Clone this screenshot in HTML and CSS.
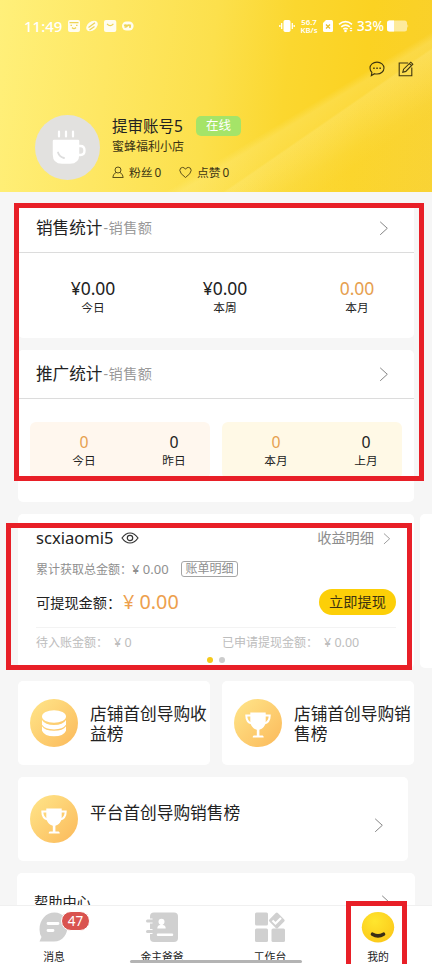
FILE: index.html
```html
<!DOCTYPE html>
<html lang="zh-CN">
<head>
<meta charset="utf-8">
<title>我的</title>
<link rel="stylesheet" href="styles.css">
</head>
<body>
<svg class="defs" width="0" height="0">
  <defs>
    <linearGradient id="gold" x1="0" y1="0" x2="1" y2="1"><stop offset="0" stop-color="#ffe68a"/><stop offset="1" stop-color="#fbb95a"/></linearGradient>
    <radialGradient id="face" cx=".4" cy=".3" r=".75"><stop offset="0" stop-color="#ffe62e"/><stop offset="1" stop-color="#fcc91a"/></radialGradient>
    <symbol id="chevron" viewBox="0 0 10 16"><path d="M1.2 1.8 8.3 8.3 1.2 14.8" fill="none" stroke="#858585"/></symbol>
    <symbol id="trophy" viewBox="0 0 48 48">
      <circle cx="24" cy="24" r="24" fill="url(#gold)"/>
      <path d="M16.300 13.500h15.400v8.500c0 5-3.200 8.100-6.300 8.700v5.800h2.600c1 0 1.700.6 1.700 2h-11c0-1.400.7-2 1.700-2h2.400v-5.800c-3.100-.6-6.500-3.700-6.500-8.700z" fill="#fff"/>
      <path d="M17 16.500h-4.700c0 4.700 1.800 7.200 5.500 8M31 16.500h4.700c0 4.700-1.800 7.200-5.500 8" fill="none" stroke="#fff" stroke-width="2"/>
    </symbol>
  </defs>
</svg>
<div class="phone">
  <main class="content">
    <header class="hero">
      <div class="status">
        <span class="time">11:49</span>
        <svg class="notices" width="68" height="14" viewBox="0 0 68 14">
          <g fill="#fffdf0">
            <rect x="0" y="1" width="12" height="12" rx="2"/>
            <ellipse cx="24" cy="7" rx="6.500" ry="4.300" transform="rotate(-38 24 7)"/>
            <rect x="36" y="1" width="12.300" height="12" rx="2"/>
            <rect x="54" y="2.500" width="11.600" height="9" rx="4.500"/>
          </g>
          <g fill="none" stroke="#eed455" stroke-width="1.200">
            <path d="M1.500 3.600h9M2.500 6.300h1.500M8 6.300h1.500M4 8.500q2 2.200 4 0M20.500 8.500 27 3.700M21.500 11l5-3.500M39 4.800q3.200 3.600 6.400 0"/>
            <path d="M56 6.500q2-1 3 .5 1-1.500 4-.5M56.500 8h2M61 8h2" stroke-width="1.600"/>
          </g>
        </svg>
        <svg class="vibrate" width="16" height="14" viewBox="0 0 16 14"><rect x="4.500" y="1" width="7" height="12" rx="1.700" fill="#fff"/><path d="M2.700 4v6M13.300 4v6M.8 6v2M15.200 6v2" stroke="#fff" stroke-width="1.300"/></svg>
        <div class="speed"><span>56.7</span><span>KB/s</span></div>
        <svg class="sim" width="10" height="12" viewBox="0 0 10 12"><path d="M3 0h5.500Q10 0 10 1.500v9Q10 12 8.500 12h-7Q0 12 0 10.500V3z" fill="#fff"/><path d="m3 4.500 4 4m0-4-4 4" stroke="#e9bf2c" stroke-width="1.300"/></svg>
        <svg class="wifi" width="16" height="13" viewBox="0 0 16 13"><path d="M1 4.300q6.500-5.300 13 0M3.200 6.900q4.300-3.500 8.600 0M5.300 9.200q2.200-1.700 4.400 0" fill="none" stroke="#fff" stroke-width="1.600"/><circle cx="7.500" cy="11" r="1.300" fill="#fff"/><path d="m11.500 9 1.500-1.800L14.500 9zM11.500 10l1.500 1.800L14.500 10z" fill="#fff"/></svg>
        <span class="percent">33%</span>
        <svg width="22" height="12" viewBox="0 0 22 12"><rect width="20" height="11" y=".5" rx="2.500" fill="#fff" opacity=".55"/><path d="M2.500.5H7v11H2.500Q0 11.500 0 9V3Q0 .5 2.500.5z" fill="#fff"/><path d="M20.500 4v4q1.500-2 0-4z" fill="#fff" opacity=".7"/></svg>
      </div>
      <div class="actions">
        <svg width="16" height="16" viewBox="0 0 16 16"><path d="M8 1.100c4 0 7 2.600 7 5.900s-3 6-7 6q-1.300 0-2.400-.3L2.300 14.600l.6-3.200C1.600 10.300 1 8.800 1 7c0-3.300 3-5.900 7-5.900z" fill="none" stroke="#3e3510" stroke-width="1.100"/><path d="M4.200 6.600h1.500v1.500H4.200zM7.300 6.600h1.500v1.500H7.300zM10.400 6.600h1.500v1.500h-1.500z" fill="#3e3510"/></svg>
        <svg width="16" height="16" viewBox="0 0 16 16"><path d="M10.200 2H1.200v12.700h12.600V6.500M4.800 11.200l.8-3L12.800 1.200l2 2-7 7.200zM11.400 2.700l2 2" fill="none" stroke="#3e3510" stroke-width="1.100"/></svg>
      </div>
      <div class="profile">
        <div class="avatar">
          <svg width="64" height="64" viewBox="0 0 64 64"><path d="M19 26h24v13.500q0 8-8 8h-8q-8 0-8-8z" fill="#fff" stroke="#fff" stroke-width="2.500" stroke-linejoin="round"/><path d="M43 31h2.500q4 0 4 4.500t-4 4.500H43" fill="none" stroke="#fff" stroke-width="2.400"/><path d="M24 16.500v5M31 16.500v5M38 16.500v5" stroke="#fff" stroke-width="2.200" stroke-linecap="round"/><path d="M23 37.500q1.500 4.500 6 5.500" fill="none" stroke="#ddd" stroke-width="1.800" stroke-linecap="round"/></svg>
        </div>
        <div class="who">
          <div class="who-top"><span class="nick">提审账号5</span><span class="online">在线</span></div>
          <div class="shop">蜜蜂福利小店</div>
          <div class="counts">
            <svg width="12" height="13" viewBox="0 0 12 13"><circle cx="6" cy="4" r="3" fill="none" stroke="#4c4113" stroke-width=".9"/><path d="M4 6.500Q1 8 .8 11.500h10.400Q11 8 8 6.500" fill="none" stroke="#4c4113" stroke-width=".9"/></svg>
            <span class="fans">粉丝<i>0</i></span>
            <svg width="13" height="13" viewBox="0 0 13 13"><path d="M6.500 11.500Q.8 7.500.8 4.400.9 1.500 3.600 1.400 5.600 1.400 6.500 3.300 7.400 1.400 9.400 1.400q2.700.1 2.800 3 0 3.100-5.700 7.100z" fill="none" stroke="#4c4113" stroke-width=".9"/></svg>
            <span class="likes">点赞<i>0</i></span>
          </div>
        </div>
      </div>
    </header>

    <section class="card sales">
      <div class="card-head"><h2>销售统计</h2><small>-销售额</small><svg class="arrow"><use href="#chevron"/></svg></div>
      <div class="sales-grid">
        <div class="stat"><b>¥0.00</b><span>今日</span></div>
        <div class="stat"><b>¥0.00</b><span>本周</span></div>
        <div class="stat hot"><b>0.00</b><span>本月</span></div>
      </div>
    </section>

    <section class="card promo">
      <div class="card-head"><h2>推广统计</h2><small>-销售额</small><svg class="arrow"><use href="#chevron"/></svg></div>
      <div class="promo-grid">
        <div class="pair peach">
          <div class="stat hot"><b>0</b><span>今日</span></div>
          <div class="stat"><b>0</b><span>昨日</span></div>
        </div>
        <div class="pair cream">
          <div class="stat hot"><b>0</b><span>本月</span></div>
          <div class="stat"><b>0</b><span>上月</span></div>
        </div>
      </div>
    </section>

    <div class="slides">
      <section class="card wallet">
        <div class="wallet-name">
          <span>scxiaomi5</span>
          <svg width="18" height="14" viewBox="0 0 18 14"><path d="M1 7q3.500-5 8-5t8 5q-3.500 5-8 5T1 7z" fill="none" stroke="#333" stroke-width="1.200"/><circle cx="9" cy="7" r="2.700" fill="none" stroke="#333" stroke-width="1.200"/></svg>
          <span class="detail">收益明细</span>
          <svg class="arrow"><use href="#chevron"/></svg>
        </div>
        <div class="wallet-total"><span class="total-label">累计获取总金额：</span><span class="total-sum">¥ 0.00</span><span class="bill">账单明细</span></div>
        <div class="wallet-cash"><span class="cash-label">可提现金额：</span><b>¥ 0.00</b><span class="withdraw">立即提现</span></div>
        <div class="wallet-foot"><span class="wait">待入账金额：</span><span class="wait-sum">¥ 0</span><span class="applied">已申请提现金额：</span><span class="applied-sum">¥ 0.00</span></div>
        <div class="dots"><i class="on"></i><i></i></div>
      </section>
      <section class="card peek"></section>
    </div>

    <div class="ranks">
      <section class="card rank">
        <svg class="medal" viewBox="0 0 48 48"><circle cx="24" cy="24" r="24" fill="url(#gold)"/><ellipse cx="24" cy="17.500" rx="12" ry="6.200" fill="#fff"/><path d="M12 21q3 5 12 5t12-5v4.800q-3 4.600-12 4.600t-12-4.600zM12 27.300q3 4.500 12 4.500t12-4.500v4.500q-2.500 5.500-12 5.500t-12-5.500z" fill="#fff"/></svg>
        <p>店铺首创导购收益榜</p>
      </section>
      <section class="card rank">
        <svg class="medal"><use href="#trophy"/></svg>
        <p>店铺首创导购销售榜</p>
      </section>
    </div>
    <section class="card rank platform">
      <svg class="medal"><use href="#trophy"/></svg>
      <p>平台首创导购销售榜</p>
      <svg class="arrow"><use href="#chevron"/></svg>
    </section>
    <section class="card help"><span>帮助中心</span><svg class="arrow"><use href="#chevron"/></svg></section>
  </main>

  <nav class="tabs">
    <div class="tab">
      <svg width="32" height="32" viewBox="0 0 32 32"><path d="M1.500 30.500 3.500 26Q1.500 23 1.500 18.500C1.500 9 8 1.500 16.500 1.500S29.500 8 29.500 15.500 25 30.500 16 30.500z" fill="#d0d0d0"/><path d="M10 12.500h10M10 19.500h5" stroke="#fff" stroke-width="2.800" stroke-linecap="round"/></svg>
      <em class="badge">47</em>
      <span>消息</span>
    </div>
    <div class="tab">
      <svg width="32" height="32" viewBox="0 0 32 32"><rect x="4" y="1.500" width="28" height="29.500" rx="4" fill="#d0d0d0"/><path d="M1.500 10h5M1.500 20.500h5" stroke="#fff" stroke-width="5"/><path d="M1.500 10h5M1.500 20.500h5" stroke="#d0d0d0" stroke-width="3" stroke-linecap="round"/><circle cx="15.500" cy="10.800" r="3" fill="#fff"/><path d="M14.300 12h2.400v2q3 .3 3 3.500h-8.400q0-3.200 3-3.500z" fill="#fff"/><path d="M12 23.800h14" stroke="#fff" stroke-width="2.500" stroke-linecap="round"/></svg>
      <span>金主爸爸</span>
    </div>
    <div class="tab">
      <svg width="32" height="32" viewBox="0 0 32 32"><g fill="#d0d0d0"><rect x="1" y="1.500" width="13" height="13" rx="1.500"/><rect x="1" y="17.500" width="13" height="13.500" rx="1.500"/><rect x="17.500" y="17.500" width="13.500" height="13.500" rx="1.500"/><rect x="16.800" y="3.500" width="12" height="12" rx="1.500" transform="rotate(45 22.800 9.500)"/></g><path d="m18.500 9.500 3 3 5.500-5.500" fill="none" stroke="#fff" stroke-width="2.200"/></svg>
      <span>工作台</span>
    </div>
    <div class="tab">
      <svg width="34" height="32" viewBox="0 0 34 32"><ellipse cx="17" cy="16.200" rx="16.200" ry="15.200" fill="url(#face)"/><path d="M11.500 23.200q5.500 3.300 11 0" fill="none" stroke="#3b2d15" stroke-width="3.600" stroke-linecap="round"/></svg>
      <span>我的</span>
    </div>
    <div class="home-bar"></div>
  </nav>
  <div class="mark mark-stats"></div>
  <div class="mark mark-wallet"></div>
  <div class="mark mark-mine"></div>
</div>
</body>
</html>
```

FILE: styles.css
```css
* { box-sizing: border-box; }
body {
  margin: 0;
  font-family: "Noto Sans", "Noto Sans CJK SC", sans-serif;
  color: #222;
}
svg { display: block; flex: none; }
i, em { font-style: normal; }
.defs { position: absolute; }
.phone {
  position: relative;
  width: 432px;
  height: 964px;
  display: flex;
  flex-direction: column;
  background: #f6f6f6;
  overflow: hidden;
}
.content { flex: 1; min-height: 0; overflow: hidden; }

.hero {
  height: 192px;
  padding-top: 17px;
  background:
    linear-gradient(145.400deg, transparent 70.500%, rgba(255, 240, 150, .22) 71%, rgba(255, 230, 100, .05) 84%),
    linear-gradient(149deg, transparent 64.500%, rgba(255, 240, 150, .28) 66.500%, rgba(255, 235, 130, .08) 80%),
    linear-gradient(97deg, #fff07a 0%, #fee763 25%, #fce04c 48%, #fbd72f 65%, #fbd222 82%, #f9d02c 100%);
}
.status {
  height: 18px;
  padding-left: 24px;
  display: flex;
  align-items: center;
  color: #fff;
}
.time { width: 44px; font-size: 15px; line-height: 18px; font-weight: 500; }
.vibrate { margin-left: 143px; }
.speed { display: flex; flex-direction: column; margin-left: 4px; width: 20px; font-size: 7.800px; font-weight: 600; white-space: nowrap; align-items: center; }
.speed span { line-height: 8px; height: 8px; }
.sim { margin-left: 4px; }
.wifi { margin-left: 5px; }
.percent { width: 30px; font-size: 13.500px; line-height: 18px; font-weight: 500; margin-left: 3px; }
.actions { display: flex; gap: 13px; padding: 26px 0 0 369px; height: 42px; }

.profile { display: flex; padding: 38px 0 0 35px; }
.avatar { width: 65px; height: 65px; border-radius: 50%; background: #e2e1df; }
.who { padding-left: 12px; }
.who-top { display: flex; height: 23px; align-items: center; }
.nick { width: 84px; font-size: 15.500px; line-height: 23px; white-space: nowrap; }
.online {
  width: 45px; height: 20px; margin-top: -1px; border-radius: 5px;
  background: #a5e468; color: #fff; font-size: 12.500px; line-height: 20px; text-align: center;
}
.shop { font-size: 12px; line-height: 18px; color: #3c3413; }
.counts { display: flex; align-items: center; height: 18px; margin-top: 7px; font-size: 11.800px; line-height: 18px; color: #3c3413; }
.fans { width: 55px; padding-left: 5px; }
.counts i { margin-left: 2px; }
.likes { padding-left: 5px; }

.card { background: #fff; border-radius: 5px; margin-left: 18px; width: 396px; }
.card-head { display: flex; align-items: center; height: 49px; padding: 0 25px 0 18px; border-bottom: 1px solid #dcdcdc; }
.card-head h2 { margin: 0; font-size: 16.600px; line-height: 24px; font-weight: 400; }
.card-head small { font-size: 14.200px; line-height: 24px; color: #999; margin-left: 1px; letter-spacing: .5px; }
.arrow { width: 10px; height: 16px; margin-left: auto; }

.sales { margin-top: 12px; height: 134px; }
.sales-grid { display: grid; grid-template-columns: repeat(3, 132px); padding: 24px 0 0 9px; }
.stat { display: flex; flex-direction: column; align-items: center; }
.stat b { font-weight: 400; font-size: 17.500px; line-height: 22px; }
.stat span { font-size: 11.700px; line-height: 17px; }
.stat.hot b { color: #e6a04f; }

.promo { margin-top: 12px; height: 152px; }
.promo-grid { display: grid; grid-template-columns: 180px 180px; gap: 12px; padding: 23px 12px 0; }
.pair { display: grid; grid-template-columns: 90px 90px; padding: 10px 0 0 9px; height: 57px; border-radius: 6px; overflow: hidden; }
.pair .stat b { font-size: 15.800px; line-height: 20px; }
.pair .stat span { line-height: 16px; }
.peach { background: #fff7ee; }
.cream { background: #fff9e6; }

.slides { display: flex; gap: 6px; margin-top: 12px; overflow: hidden; }
.wallet { flex: none; height: 154px; padding: 13px 18px 0; }
.peek { flex: none; margin-left: 0; height: 154px; }
.wallet-name { display: flex; align-items: center; height: 22px; font-size: 16.600px; line-height: 22px; }
.wallet-name > svg:nth-child(2) { margin-left: 7px; }
.detail { margin-left: auto; font-size: 14.200px; color: #8c8c8c; }
.wallet-name .arrow { width: 8px; height: 13px; margin: 0 5px 0 9px; }
.wallet-total { display: flex; align-items: center; height: 18px; margin-top: 11px; font-size: 12px; color: #8f8f8f; white-space: nowrap; }
.total-label { width: 96px; }
.total-sum { width: 49px; font-size: 13px; }
.bill { width: 57px; height: 16px; border: 1px solid #a5a5a5; border-radius: 3px; font-size: 12px; line-height: 14px; text-align: center; }
.wallet-cash { display: flex; align-items: center; height: 26px; margin-top: 11px; font-size: 14.200px; white-space: nowrap; }
.cash-label { width: 87px; }
.wallet-cash b { font-size: 19.800px; line-height: 26px; font-weight: 400; color: #eda04d; }
.withdraw { margin: 0 0 0 auto; width: 77px; height: 26px; border-radius: 13px; background: #fccf08; color: #3c3210; line-height: 26px; text-align: center; }
.wallet-foot { display: flex; align-items: center; height: 31px; margin-top: 12px; border-top: 1px solid #f3f3f3; font-size: 12px; line-height: 18px; color: #bdbdbd; white-space: nowrap; }
.wait { width: 78px; }
.wait-sum { width: 108px; }
.applied { width: 102px; }
.wait-sum, .applied-sum { font-size: 12.500px; }
.dots { display: flex; gap: 6px; justify-content: center; margin-top: -1px; }
.dots i { width: 6px; height: 6px; border-radius: 50%; background: #ccc; }
.dots .on { background: #f5c91a; }

.ranks { display: flex; gap: 12px; margin: 13px 0 0 18px; }
.rank { display: flex; height: 84px; padding: 18px 0 0 12px; }
.ranks .rank { margin: 0; width: 192px; }
.medal { width: 48px; height: 48px; }
.rank p { margin: 5px 0 0 12px; width: 119px; font-size: 16.700px; line-height: 19.500px; }
.platform { width: 390px; margin-top: 12px; }
.platform p { width: auto; margin-top: 8px; }
.platform .arrow { margin: 22px 24px 0 auto; }
.help { display: flex; width: 398px; height: 60px; margin: 12px 0 0 17px; padding: 18px 24px 0 17px; font-size: 14.200px; line-height: 21px; }
.help .arrow { margin-top: 3px; }

.tabs { position: relative; height: 59px; background: #fff; border-top: 1px solid #f0f0f0; display: grid; grid-template-columns: repeat(4, 108px); }
.tab { position: relative; display: flex; flex-direction: column; align-items: center; padding-top: 5px; font-size: 10.800px; line-height: 16px; }
.tab span { margin-top: 6px; }
.badge { position: absolute; left: 61px; top: 5px; width: 29px; height: 20px; border: 1px solid #fff; border-radius: 10px; background: #d9534f; color: #fff; font-size: 13.500px; line-height: 18px; text-align: center; }
.home-bar { position: absolute; left: 130px; bottom: 1px; width: 172px; height: 3px; border-radius: 2px; background: #b4b4b4; }

/* Highlight frames laid over the screen */
.mark { position: absolute; border: 5px solid #e81f27; }
.mark-stats { left: 14px; top: 203px; width: 410px; height: 278px; }
.mark-wallet { left: 6px; top: 523px; width: 406px; height: 147px; }
.mark-mine { left: 346px; top: 901px; width: 61px; height: 70px; }
```
